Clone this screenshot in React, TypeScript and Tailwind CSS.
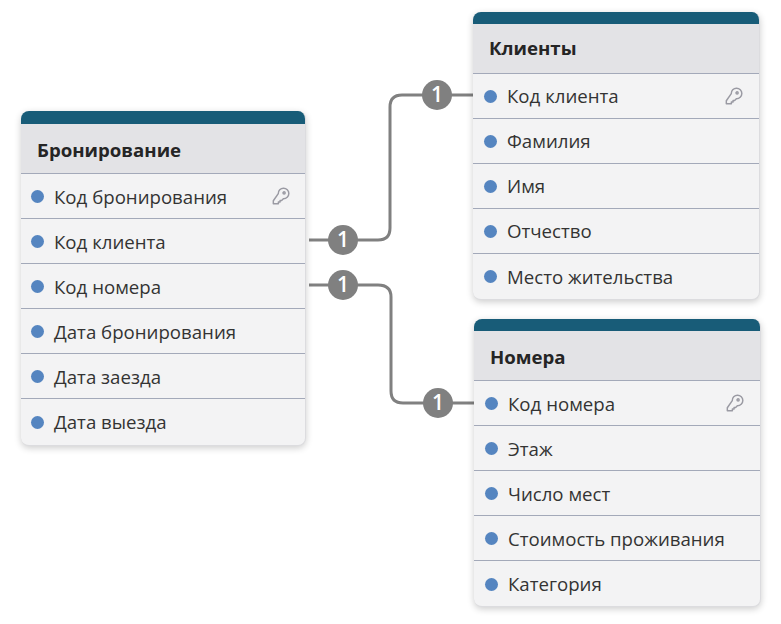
import { Fragment } from "react";

const tables = [
  {
    name: "Бронирование",
    pos: "left-[21px] top-[111px] w-[285px] pb-[1px]",
    bar: "h-[13px]",
    shift: "pt-[2px]",
    rowShift: "pt-[1px]",
    pad: "pl-[10px] pr-[15px]",
    rows: ["Код бронирования", "Код клиента", "Код номера", "Дата бронирования", "Дата заезда", "Дата выезда"],
  },
  {
    name: "Клиенты",
    pos: "left-[473px] top-[12px] w-[287px]",
    bar: "h-[12px]",
    shift: "pb-[1px]",
    rowShift: "",
    pad: "pl-[11px] pr-[16px]",
    rows: ["Код клиента", "Фамилия", "Имя", "Отчество", "Место жительства"],
  },
  {
    name: "Номера",
    pos: "left-[474px] top-[319px] w-[287px]",
    bar: "h-[12px]",
    shift: "pt-[2px]",
    rowShift: "pt-[1px]",
    pad: "pl-[11px] pr-[16px]",
    rows: ["Код номера", "Этаж", "Число мест", "Стоимость проживания", "Категория"],
  },
];

function KeyIcon() {
  return (
    <svg width="19" height="19" viewBox="0 0 18 18" fill="none" stroke="#9a9aa3" strokeWidth="1.4" strokeLinejoin="round">
      <path d="M6.9 6.3a5 5 0 1 1 4.8 4.8l-1.6 1.6H8.6v1.6H7v1.6H2.2v-2.9z" />
      <circle cx="12.4" cy="5.6" r="1" />
    </svg>
  );
}

type TableProps = { name: string; pos: string; bar: string; shift: string; rowShift: string; pad: string; rows: string[] };

function Table({ name, pos, bar, shift, rowShift, pad, rows }: TableProps) {
  return (
    <div
      className={`absolute ${pos} overflow-hidden rounded-[8px] border-r border-b border-[#dcdcdf] bg-[#f3f3f4] shadow-[0_2px_7px_rgba(0,0,0,0.2)]`}
    >
      <div className={`${bar} bg-[#185c78]`} />
      <div
        className={`flex h-[50px] items-center border-b border-[#a3a9b9] bg-[#e3e3e6] pl-[16px] text-[18.65px] font-bold text-[#252525] ${shift}`}
      >
        {name}
      </div>
      {rows.map((row, i) => (
        <div
          key={row}
          className={`flex h-[45px] items-center ${pad} text-[18.65px] text-[#333333] ${
            i < rows.length - 1 ? "border-b border-[#a3a9b9]" : ""
          } ${rowShift}`}
        >
          <span className="h-[13px] w-[13px] rounded-full bg-[#5585c0]" />
          <span className="ml-[10px] flex-1">{row}</span>
          {i === 0 && <KeyIcon />}
        </div>
      ))}
    </div>
  );
}

const lines = [
  "M309 240H378Q390 240 390 228V107Q390 95 402 95H473",
  "M309 285H378Q391 285 391 297V391Q391 403 403 403H474",
];

const badges = [
  [343, 240],
  [437, 95],
  [343, 285],
  [438, 403],
];

export default function App() {
  return (
    <div className="relative h-[624px] w-[781px] overflow-hidden bg-white font-['Open_Sans','Noto_Sans',sans-serif]">
      <svg className="absolute left-0 top-0" width="781" height="624">
        {lines.map((d) => (
          <path key={d} d={d} fill="none" stroke="#808080" strokeWidth="3" />
        ))}
        {badges.map(([x, y]) => (
          <Fragment key={`${x}-${y}`}>
            <circle cx={x} cy={y} r="15" fill="#808080" />
            <text x={x} y={y + 7} textAnchor="middle" fontSize="21" fontWeight="600" fill="#ffffff" fontFamily="Open Sans">
              1
            </text>
          </Fragment>
        ))}
      </svg>
      {tables.map((t) => (
        <Table key={t.name} {...t} />
      ))}
    </div>
  );
}
